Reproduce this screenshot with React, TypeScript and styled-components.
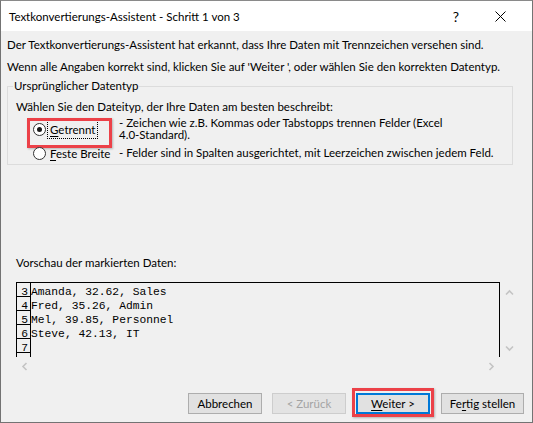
import React from "react";
import styled, { createGlobalStyle, css } from "styled-components";

const GlobalStyle = createGlobalStyle`
  html, body { margin: 0; padding: 0; background: #f0f0f0; }
  #root { width: 533px; height: 423px; }
  * { box-sizing: border-box; }
`;

const UI_FONT = `Lato, "Noto Sans", sans-serif`;
const MONO_FONT = `"Liberation Mono", "Courier New", monospace`;

const Window = styled.div`
  width: 533px;
  height: 423px;
  border: 1px solid #737373;
  border-top-color: #8a8a8a;
  background: #f0f0f0;
  display: flex;
  flex-direction: column;
  font-family: ${UI_FONT};
  font-size: 11.5px;
  color: #000;
  overflow: hidden;
`;

const TitleBar = styled.div`
  height: 30px;
  flex: none;
  background: #fff;
  display: flex;
  align-items: center;
  padding-left: 8px;
  padding-right: 10px;
`;

const Title = styled.div`
  flex: 1;
  line-height: 16px;
  padding-top: 1px;
`;

const CtrlButton = styled.div`
  width: 44px;
  height: 30px;
  display: flex;
  align-items: center;
  justify-content: center;
  font-size: 14px;
`;

const Body = styled.div`
  flex: 1;
  display: flex;
  flex-direction: column;
  padding: 0 6px;
`;

const Intro = styled.div`
  line-height: 16px;
  margin-top: 6px;
  white-space: nowrap;
`;

const GroupBox = styled.fieldset`
  width: 506px;
  margin: 3px 0 0 0;
  padding: 0 8px 3px 8px;
  border: 1px solid #dcdcdc;
  min-width: 0;
`;

const Legend = styled.legend`
  padding: 0 1px;
  margin-left: -3px;
  line-height: 16px;
`;

const Prompt = styled.div`
  line-height: 16px;
  margin-top: 5px;
`;

const OptionRow = styled.div<{ $top: number }>`
  display: flex;
  align-items: flex-start;
  margin-top: ${(p) => p.$top}px;
`;

const OptionLabel = styled.div<{ $highlight?: boolean; $height: number }>`
  position: relative;
  width: 103px;
  height: ${(p) => p.$height}px;
  flex: none;
  display: flex;
  align-items: center;
  padding-left: 17px;
  ${(p) =>
    p.$highlight &&
    css`
      &::after {
        content: "";
        position: absolute;
        left: 11px;
        top: 1px;
        width: 79px;
        height: 24px;
        border: 3px solid #ec4148;
        box-shadow: 1px 1px 2px rgba(0, 0, 0, 0.25);
        pointer-events: none;
      }
    `}
`;

const Radio = styled.span<{ $checked?: boolean }>`
  width: 13px;
  height: 13px;
  flex: none;
  border-radius: 50%;
  border: 1px solid #333;
  background: #fff;
  display: flex;
  align-items: center;
  justify-content: center;
  &::before {
    content: "";
    width: 5px;
    height: 5px;
    border-radius: 50%;
    background: ${(p) => (p.$checked ? "#1a1a1a" : "transparent")};
  }
`;

const LabelText = styled.span<{ $focused?: boolean }>`
  margin-left: 2px;
  padding: 1px 2px;
  line-height: 15px;
  white-space: nowrap;
  outline: ${(p) => (p.$focused ? "1px dotted #000" : "none")};
  outline-offset: 0;
`;

const Mnemonic = styled.span`
  text-decoration: underline;
  text-underline-offset: 2px;
`;

const OptionDesc = styled.div<{ $lh: number }>`
  line-height: ${(p) => p.$lh}px;
  white-space: nowrap;
`;

const PreviewLabel = styled.div`
  line-height: 16px;
  margin-top: 90px;
  margin-left: 9px;
`;

const PreviewGrid = styled.div`
  margin-top: 11px;
  margin-left: 9px;
  display: grid;
  grid-template-columns: 484px 17px;
  grid-template-rows: 75px 18px;
`;

const PreviewBox = styled.div`
  border: 1px solid #000;
  border-bottom: none;
  overflow: hidden;
  font-family: ${MONO_FONT};
  font-size: 11.3px;
`;

const DataRow = styled.div`
  display: flex;
  height: 14px;
`;

const RowNum = styled.div`
  width: 14px;
  flex: none;
  border-right: 1px solid #000;
  border-bottom: 1px solid #000;
  text-align: right;
  padding: 2px 2px 0 0;
  line-height: 14px;
`;

const RowText = styled.div`
  line-height: 14px;
  padding-top: 2px;
  white-space: pre;
`;

const VScroll = styled.div`
  display: flex;
  flex-direction: column;
  justify-content: space-between;
  align-items: center;
  padding: 6px 0 4px 2px;
`;

const HScroll = styled.div`
  display: flex;
  justify-content: space-between;
  align-items: center;
  padding: 0 4px 0 4px;
`;

const ButtonRow = styled.div`
  display: flex;
  justify-content: flex-end;
  margin-top: 18px;
  padding-right: 2px;
`;

const Button = styled.div<{
  $width: number;
  $disabled?: boolean;
  $default?: boolean;
  $gap: number;
}>`
  position: relative;
  width: ${(p) => p.$width}px;
  height: 21px;
  margin-left: ${(p) => p.$gap}px;
  display: flex;
  align-items: center;
  justify-content: center;
  background: #e1e1e1;
  border: 1px solid #adadad;
  line-height: 16px;
  color: #000;
  ${(p) =>
    p.$disabled &&
    css`
      background: #e3e3e3;
      border-color: #cdcdcd;
      color: #a3a3a3;
    `}
  ${(p) =>
    p.$default &&
    css`
      border: 2px solid #0078d7;
      &::after {
        content: "";
        position: absolute;
        left: -6px;
        top: -7px;
        right: -6px;
        bottom: -5px;
        border: 3px solid #ec4148;
        box-shadow: 1px 1px 2px rgba(0, 0, 0, 0.25);
        pointer-events: none;
      }
    `}
`;

const Chevron: React.FC<{ dir: "up" | "down" | "left" | "right" }> = ({ dir }) => {
  const rot = { up: 0, down: 180, left: -90, right: 90 }[dir];
  return (
    <svg width="9" height="9" viewBox="0 0 9 9" style={{ transform: `rotate(${rot}deg)` }}>
      <path d="M1 6.5 L4.5 3 L8 6.5" fill="none" stroke="#c4c4c4" strokeWidth="1.6" />
    </svg>
  );
};

const rows = [
  ["3", "Amanda, 32.62, Sales"],
  ["4", "Fred, 35.26, Admin"],
  ["5", "Mel, 39.85, Personnel"],
  ["6", "Steve, 42.13, IT"],
  ["7", ""],
  ["", ""],
];

export default function App() {
  return (
    <>
      <GlobalStyle />
      <Window>
        <TitleBar>
          <Title>Textkonvertierungs-Assistent - Schritt 1 von 3</Title>
          <CtrlButton>?</CtrlButton>
          <CtrlButton>
            <svg width="11" height="11" viewBox="0 0 11 11">
              <path d="M0.5 0.5 L10.5 10.5 M10.5 0.5 L0.5 10.5" stroke="#000" strokeWidth="1" />
            </svg>
          </CtrlButton>
        </TitleBar>
        <Body>
          <Intro>
            Der Textkonvertierungs-Assistent hat erkannt, dass Ihre Daten mit Trennzeichen versehen sind.
          </Intro>
          <Intro>
            Wenn alle Angaben korrekt sind, klicken Sie auf 'Weiter ', oder wählen Sie den korrekten Datentyp.
          </Intro>
          <GroupBox>
            <Legend>Ursprünglicher Datentyp</Legend>
            <Prompt>Wählen Sie den Dateityp, der Ihre Daten am besten beschreibt:</Prompt>
            <OptionRow $top={2}>
              <OptionLabel $highlight $height={24}>
                <Radio $checked />
                <LabelText $focused>
                  <Mnemonic>G</Mnemonic>etrennt
                </LabelText>
              </OptionLabel>
              <OptionDesc $lh={12}>
                - Zeichen wie z.B. Kommas oder Tabstopps trennen Felder (Excel
                <br />
                4.0-Standard).
              </OptionDesc>
            </OptionRow>
            <OptionRow $top={4}>
              <OptionLabel $height={16}>
                <Radio />
                <LabelText>
                  <Mnemonic>F</Mnemonic>este Breite
                </LabelText>
              </OptionLabel>
              <OptionDesc $lh={16}>
                - Felder sind in Spalten ausgerichtet, mit Leerzeichen zwischen jedem Feld.
              </OptionDesc>
            </OptionRow>
          </GroupBox>
          <PreviewLabel>Vorschau der markierten Daten:</PreviewLabel>
          <PreviewGrid>
            <PreviewBox>
              {rows.map(([n, t], i) => (
                <DataRow key={i}>
                  <RowNum>{n}</RowNum>
                  <RowText>{t}</RowText>
                </DataRow>
              ))}
            </PreviewBox>
            <VScroll>
              <Chevron dir="up" />
              <Chevron dir="down" />
            </VScroll>
            <HScroll>
              <Chevron dir="left" />
              <Chevron dir="right" />
            </HScroll>
            <div />
          </PreviewGrid>
          <ButtonRow>
            <Button $width={74} $gap={0}>Abbrechen</Button>
            <Button $width={74} $gap={10} $disabled>
              &lt; Zurück
            </Button>
            <Button $width={74} $gap={10} $default>
              <span>
                <Mnemonic>W</Mnemonic>eiter &gt;
              </span>
            </Button>
            <Button $width={83} $gap={11}>
              <span>
                Fe<Mnemonic>r</Mnemonic>tig stellen
              </span>
            </Button>
          </ButtonRow>
        </Body>
      </Window>
    </>
  );
}
